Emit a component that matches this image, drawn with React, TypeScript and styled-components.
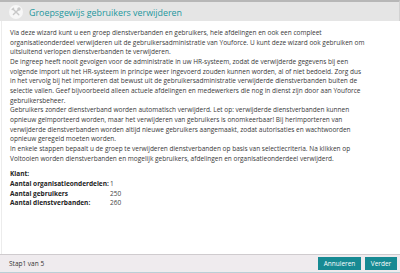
import styled, { createGlobalStyle } from "styled-components";

const Global = createGlobalStyle`
	html, body {
		margin: 0;
		padding: 0;
		background: #ffffff;
	}
`;

const Window = styled.div`
	width: 400px;
	height: 273px;
	display: flex;
	flex-direction: column;
	box-sizing: border-box;
	background: #ffffff;
	overflow: hidden;
	font-family: "Open Sans", "Noto Sans", sans-serif;
`;

const TitleBar = styled.div`
	height: 21px;
	display: flex;
	align-items: center;
	gap: 6px;
	padding-left: 9px;
	box-sizing: border-box;
	background: #e5e5e5;
	border-top: 2px solid #b7b7b7;
	border-right: 1px solid #d2d2d2;
`;

const Title = styled.div`
	font-size: 8.9px;
	color: #23979d;
	padding-top: 1px;
`;

const Body = styled.div`
	flex: 1;
	padding: 7px 8px 0 8px;
	border-left: 1px solid #ececec;
	margin-left: 1px;
	font-size: 6.5px;
	line-height: 9.65px;
	color: #383838;
	white-space: nowrap;
`;

const Para = styled.div``;

const Gap = styled.div`
	height: 6px;
`;

const Stats = styled.div`
	display: grid;
	grid-template-columns: 100px auto;
`;

const Label = styled.div<{ $span?: boolean }>`
	font-weight: 700;
	color: #222222;
	grid-column: ${({ $span }) => ($span ? "1 / 3" : "auto")};
`;

const Value = styled.div`
	color: #444444;
`;

const Footer = styled.div`
	height: 17px;
	display: flex;
	align-items: center;
	justify-content: space-between;
	padding: 0 3px 0 9px;
	background: #efebee;
	border-top: 1px solid #cfcbce;
	border-bottom: 1px solid #b9cfd6;
	font-size: 6.5px;
	color: #333333;
`;

const Buttons = styled.div`
	display: flex;
	gap: 4px;
`;

const Button = styled.button<{ $wide?: boolean }>`
	height: 13px;
	width: ${({ $wide }) => ($wide ? "43px" : "32px")};
	padding: 0;
	border: none;
	background: #178a93;
	color: #ffffff;
	font-family: "Open Sans", "Noto Sans", sans-serif;
	font-size: 6.5px;
	line-height: 13px;
	cursor: pointer;
`;

function ToolsIcon() {
	return (
		<svg width="14" height="14" viewBox="0 0 14 14">
			<circle cx="7" cy="7" r="7" fill="#f7f7f7" />
			<g stroke="#c8c8c8" strokeWidth="1.4" strokeLinecap="round" fill="none">
				<line x1="4.2" y1="4.2" x2="9.8" y2="9.8" />
				<line x1="9.6" y1="4.4" x2="4.4" y2="9.6" />
				<path d="M3.2 4.6 L4.6 3.2" />
				<circle cx="10" cy="4" r="1" />
			</g>
		</svg>
	);
}

export default function App() {
	return (
		<Window>
			<Global />
			<TitleBar>
				<ToolsIcon />
				<Title>Groepsgewijs gebruikers verwijderen</Title>
			</TitleBar>
			<Body>
				<Para>
					Via deze wizard kunt u een groep dienstverbanden en gebruikers, hele afdelingen en ook een compleet
					<br />
					organisatieonderdeel verwijderen uit de gebruikersadministratie van Youforce. U kunt deze wizard ook gebruiken om
					<br />
					uitsluitend verlopen dienstverbanden te verwijderen.
				</Para>
				<Para>
					De ingreep heeft nooit gevolgen voor de administratie in uw HR-systeem, zodat de verwijderde gegevens bij een
					<br />
					volgende import uit het HR-systeem in principe weer ingevoerd zouden kunnen worden, al of niet bedoeld. Zorg dus
					<br />
					in het vervolg bij het importeren dat bewust uit de gebruikersadministratie verwijderde dienstverbanden buiten de
					<br />
					selectie vallen. Geef bijvoorbeeld alleen actuele afdelingen en medewerkers die nog in dienst zijn door aan Youforce
					<br />
					gebruikersbeheer.
				</Para>
				<Para>
					Gebruikers zonder dienstverband worden automatisch verwijderd. Let op: verwijderde dienstverbanden kunnen
					<br />
					opnieuw geïmporteerd worden, maar het verwijderen van gebruikers is onomkeerbaar! Bij herimporteren van
					<br />
					verwijderde dienstverbanden worden altijd nieuwe gebruikers aangemaakt, zodat autorisaties en wachtwoorden
					<br />
					opnieuw geregeld moeten worden.
				</Para>
				<Para>
					In enkele stappen bepaalt u de groep te verwijderen dienstverbanden op basis van selectiecriteria. Na klikken op
					<br />
					Voltooien worden dienstverbanden en mogelijk gebruikers, afdelingen en organisatieonderdeel verwijderd.
				</Para>
				<Gap />
				<Stats>
					<Label $span>Klant:</Label>
					<Label>Aantal organisatieonderdelen:</Label>
					<Value>1</Value>
					<Label>Aantal gebruikers</Label>
					<Value>250</Value>
					<Label>Aantal dienstverbanden:</Label>
					<Value>260</Value>
				</Stats>
			</Body>
			<Footer>
				<span>Stap1 van 5</span>
				<Buttons>
					<Button $wide>Annuleren</Button>
					<Button>Verder</Button>
				</Buttons>
			</Footer>
		</Window>
	);
}
